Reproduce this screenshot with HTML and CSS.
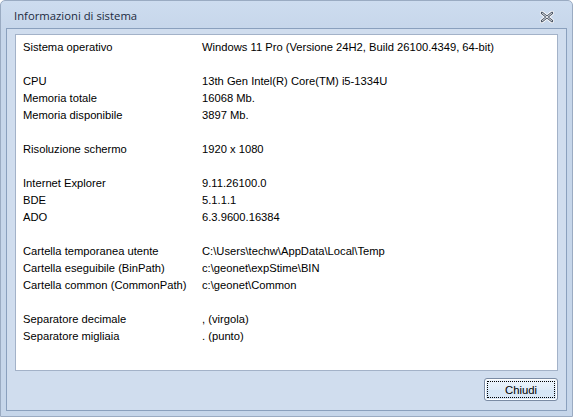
FILE: index.html
```html
<!DOCTYPE html>
<html>
<head>
<meta charset="utf-8">
<link rel="stylesheet" href="styles.css">
</head>
<body>
<div class="window">
  <div class="titlebar">
    <span class="title">Informazioni di sistema</span>
    <span class="close">
      <svg width="16" height="14" viewBox="0 0 16 14">
        <path d="M3 3 L13 11 M13 3 L3 11" stroke="#ffffff" stroke-width="4.2" stroke-linecap="round"/>
        <path d="M3 3 L13 11 M13 3 L3 11" stroke="#4a5566" stroke-width="2.6" stroke-linecap="round"/>
        <path d="M3.4 3.3 L12.6 10.7 M12.6 3.3 L3.4 10.7" stroke="#ffffff" stroke-width="0.9" stroke-linecap="round"/>
      </svg>
    </span>
  </div>
  <div class="client">
    <div class="panel">
      <div class="grid">
        <span>Sistema operativo</span><span>Windows 11 Pro (Versione 24H2, Build 26100.4349, 64-bit)</span>
        <span class="blank"></span><span class="blank"></span>
        <span>CPU</span><span>13th Gen Intel(R) Core(TM) i5-1334U</span>
        <span>Memoria totale</span><span>16068 Mb.</span>
        <span>Memoria disponibile</span><span>3897 Mb.</span>
        <span class="blank"></span><span class="blank"></span>
        <span>Risoluzione schermo</span><span>1920 x 1080</span>
        <span class="blank"></span><span class="blank"></span>
        <span>Internet Explorer</span><span>9.11.26100.0</span>
        <span>BDE</span><span>5.1.1.1</span>
        <span>ADO</span><span>6.3.9600.16384</span>
        <span class="blank"></span><span class="blank"></span>
        <span>Cartella temporanea utente</span><span>C:\Users\techw\AppData\Local\Temp</span>
        <span>Cartella eseguibile (BinPath)</span><span>c:\geonet\expStime\BIN</span>
        <span>Cartella common (CommonPath)</span><span>c:\geonet\Common</span>
        <span class="blank"></span><span class="blank"></span>
        <span>Separatore decimale</span><span>, (virgola)</span>
        <span>Separatore migliaia</span><span>. (punto)</span>
      </div>
    </div>
    <div class="footer">
      <button class="btn"><span class="focus">Chiudi</span></button>
    </div>
  </div>
</div>
</body>
</html>
```
FILE: styles.css
```css
html, body {
  margin: 0;
  padding: 0;
  background: #ffffff;
}
.window {
  width: 573px;
  height: 417px;
  box-sizing: border-box;
  background: linear-gradient(#cddcef, #c6d6ea 30px, #c6d6ea);
  border: 1px solid #9aabc2;
  border-radius: 5px 5px 0 0;
  padding: 0 5px 5px 5px;
  display: flex;
  flex-direction: column;
  font-family: "Liberation Sans", Arial, sans-serif;
}
.titlebar {
  height: 27px;
  display: flex;
  align-items: center;
  justify-content: space-between;
  flex: none;
}
.title {
  font-family: "Open Sans", "Noto Sans", sans-serif;
  font-size: 11.3px;
  color: #1b2a40;
  padding-left: 8px;
  padding-top: 2px;
}
.close {
  width: 18px;
  height: 16px;
  display: flex;
  align-items: center;
  justify-content: center;
  margin-right: 11px;
  margin-top: 4px;
}
.client {
  flex: 1;
  background: #d0ddee;
  border: 1px solid #8aa0bd;
  display: flex;
  flex-direction: column;
  padding: 5px 8px 9px 8px;
}
.panel {
  height: 337px;
  box-sizing: border-box;
  background: #ffffff;
  border: 1px solid #a3b2c8;
  padding: 3px 7px 0 7px;
  flex: none;
}
.grid {
  display: grid;
  grid-template-columns: 179px 1fr;
  grid-auto-rows: 17px;
  align-items: center;
  font-size: 11.2px;
  color: #000000;
  white-space: nowrap;
}
.footer {
  display: flex;
  justify-content: flex-end;
  margin-top: 7px;
}
.btn {
  width: 74px;
  height: 23px;
  box-sizing: border-box;
  border: 1px solid #7a8ba4;
  border-radius: 3px;
  background: linear-gradient(#eef5fc, #e0ecf8 50%, #d6e6f6 51%, #d9e8f7);
  padding: 2px;
  display: flex;
  font-family: "Liberation Sans", Arial, sans-serif;
  font-size: 11.3px;
  color: #000;
  box-shadow: inset 0 0 0 1px #ffffff;
}
.focus {
  flex: 1;
  border: 1px dotted #000;
  display: flex;
  align-items: center;
  justify-content: center;
}
```
